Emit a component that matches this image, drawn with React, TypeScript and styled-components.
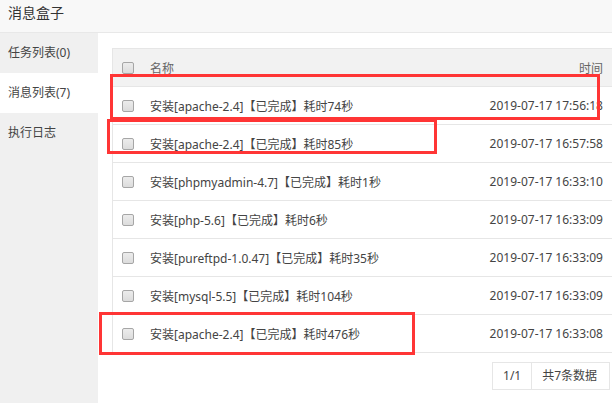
import React from "react";
import styled, { createGlobalStyle } from "styled-components";

const Global = createGlobalStyle`
  html, body { margin: 0; padding: 0; background: #fff; }
  body { font-family: "Noto Sans", "Noto Sans CJK SC", sans-serif; color: #333; }
  * { box-sizing: border-box; }
`;

const Page = styled.div`
  position: relative;
  width: 612px;
  height: 403px;
  overflow: hidden;
  display: flex;
  flex-direction: column;
  background: #fff;
`;

const TitleBar = styled.div`
  height: 33px;
  flex: none;
  background: #f8f8f8;
  border-bottom: 1px solid #e8e8e8;
  padding-left: 8px;
  font-size: 14px;
  line-height: 26px;
  color: #333;
`;

const Body = styled.div`
  flex: 1;
  display: flex;
  min-height: 0;
`;

const Sidebar = styled.div`
  width: 98px;
  flex: none;
  background: #f0f0f0;
  display: flex;
  flex-direction: column;
`;

const NavItem = styled.div<{ $active?: boolean }>`
  height: 40px;
  line-height: 40px;
  padding-left: 8px;
  font-size: 12px;
  color: #444;
  background: ${(p) => (p.$active ? "#fff" : "transparent")};
`;

const Main = styled.div`
  flex: 1;
  overflow: hidden;
  padding: 15px 0 0 14px;
`;

const Table = styled.div`
  width: 510px;
  border: 1px solid #e6e6e6;
  border-bottom: none;
`;

const Row = styled.div<{ $head?: boolean }>`
  height: 38px;
  display: grid;
  grid-template-columns: 37px 1fr 160px;
  align-items: center;
  font-size: 12px;
  color: ${(p) => (p.$head ? "#666" : "#444")};
  background: ${(p) => (p.$head ? "#f2f2f2" : "#fff")};
  border-bottom: 1px solid #e6e6e6;
`;

const CheckCell = styled.div`
  display: flex;
  align-items: center;
  padding-left: 9px;
`;

const Box = styled.span`
  width: 12px;
  height: 12px;
  border: 1px solid #a6a6a6;
  border-radius: 2px;
  background: linear-gradient(#ececec, #dcdcdc);
`;

const NameCell = styled.div`
  white-space: nowrap;
`;

const TimeCell = styled.div`
  text-align: right;
  padding-right: 18px;
  white-space: nowrap;
`;

const Pager = styled.div`
  width: 510px;
  display: flex;
  justify-content: flex-end;
  margin-top: 9px;
  padding-right: 12px;
`;

const PagerCell = styled.div<{ $first?: boolean }>`
  height: 28px;
  line-height: 26px;
  font-size: 12px;
  color: #444;
  border: 1px solid #e6e6e6;
  border-left: ${(p) => (p.$first ? "1px solid #e6e6e6" : "none")};
  padding: ${(p) => (p.$first ? "0" : "0 12px 0 10px")};
  width: ${(p) => (p.$first ? "40px" : "auto")};
  text-align: center;
`;

const RedBox = styled.div`
  position: absolute;
  border: 3px solid #ff3535;
  pointer-events: none;
`;

const rows = [
  ["安装[apache-2.4]【已完成】耗时74秒", "2019-07-17 17:56:18"],
  ["安装[apache-2.4]【已完成】耗时85秒", "2019-07-17 16:57:58"],
  ["安装[phpmyadmin-4.7]【已完成】耗时1秒", "2019-07-17 16:33:10"],
  ["安装[php-5.6]【已完成】耗时6秒", "2019-07-17 16:33:09"],
  ["安装[pureftpd-1.0.47]【已完成】耗时35秒", "2019-07-17 16:33:09"],
  ["安装[mysql-5.5]【已完成】耗时104秒", "2019-07-17 16:33:09"],
  ["安装[apache-2.4]【已完成】耗时476秒", "2019-07-17 16:33:08"],
];

const marks = [
  { left: 110, top: 74, width: 490, height: 46 },
  { left: 107, top: 119, width: 330, height: 35 },
  { left: 99, top: 312, width: 316, height: 43 },
];

export default function App() {
  return (
    <Page>
      <Global />
      <TitleBar>消息盒子</TitleBar>
      <Body>
        <Sidebar>
          <NavItem>任务列表(0)</NavItem>
          <NavItem $active>消息列表(7)</NavItem>
          <NavItem>执行日志</NavItem>
        </Sidebar>
        <Main>
          <Table>
            <Row $head>
              <CheckCell>
                <Box />
              </CheckCell>
              <NameCell>名称</NameCell>
              <TimeCell>时间</TimeCell>
            </Row>
            {rows.map(([name, time], i) => (
              <Row key={i}>
                <CheckCell>
                  <Box />
                </CheckCell>
                <NameCell>{name}</NameCell>
                <TimeCell>{time}</TimeCell>
              </Row>
            ))}
          </Table>
          <Pager>
            <PagerCell $first>1/1</PagerCell>
            <PagerCell>共7条数据</PagerCell>
          </Pager>
        </Main>
      </Body>
      {marks.map((m, i) => (
        <RedBox
          key={i}
          style={{ left: m.left, top: m.top, width: m.width, height: m.height }}
        />
      ))}
    </Page>
  );
}
